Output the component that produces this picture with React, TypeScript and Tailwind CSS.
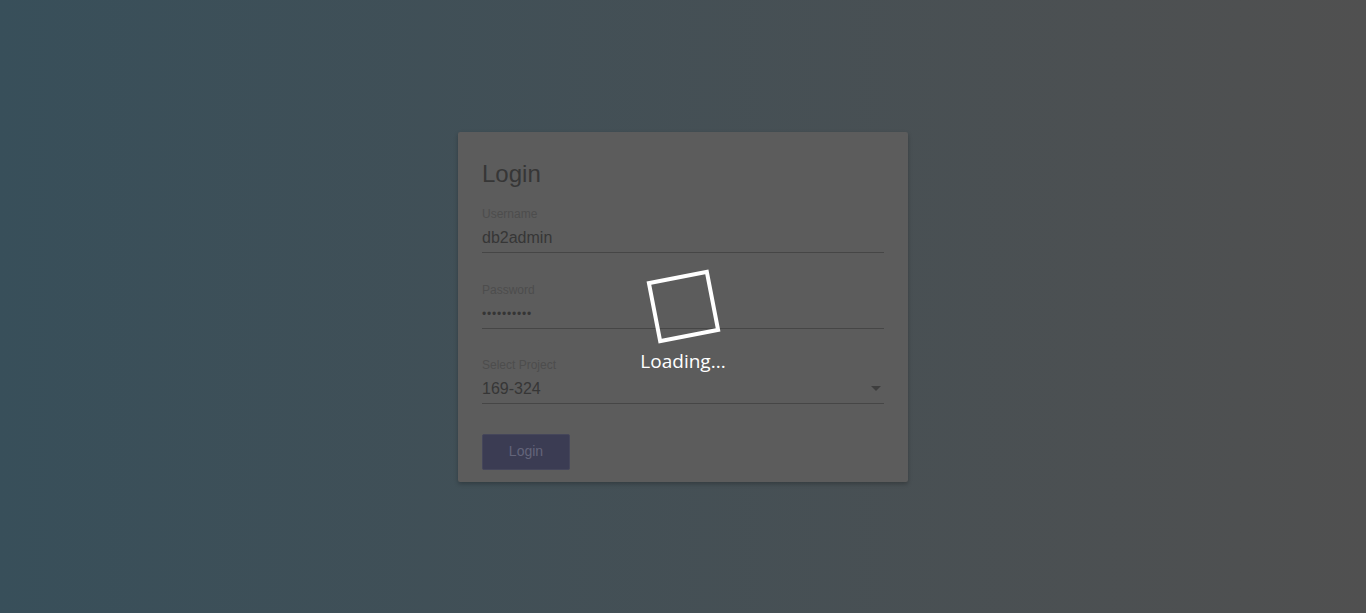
import React from "react";

const fields = [
  { label: "Username", value: "db2admin", kind: "text" },
  { label: "Password", value: "••••••••••", kind: "password" },
  { label: "Select Project", value: "169-324", kind: "select" },
];

export default function App() {
  return (
    <div
      className="relative h-[613px] w-full overflow-hidden bg-gradient-to-r from-[#384f5a] to-[#505050] flex items-center justify-center"
      style={{ fontFamily: '"Liberation Sans", Arial, sans-serif' }}
    >
      {/* login card (dimmed) */}
      <div className="w-[450px] h-[350px] bg-[#5c5c5c] rounded-[2px] shadow-[0_2px_4px_rgba(0,0,0,0.25)] px-6 pt-[26px] pb-[13px]">
        <h1 className="text-[24px] leading-[32px] text-[#363636]">Login</h1>

        <div className="mt-[16px] flex flex-col">
          {fields.map((f, i) => (
            <div
              key={f.label}
              className={i === 0 ? "" : i === 1 ? "mt-[29px]" : "mt-[28px]"}
            >
              <p className="text-[12px] leading-[16px] text-[#4d4d4d]">{f.label}</p>
              <div className="relative pt-1 pb-[2px] border-b border-[#464646] flex items-center">
                {f.kind === "password" ? (
                  <span className="h-6 flex items-center text-[12px] tracking-[0.8px] text-[#353535]">
                    {f.value}
                  </span>
                ) : (
                  <span className="h-6 leading-6 text-[16px] text-[#363636]">{f.value}</span>
                )}
                {f.kind === "select" && (
                  <span className="ml-auto mr-[3px] w-0 h-0 border-l-[5px] border-r-[5px] border-t-[5px] border-l-transparent border-r-transparent border-t-[#3e3e3e]" />
                )}
              </div>
            </div>
          ))}
        </div>

        <button className="mt-[30px] w-[88px] h-[36px] rounded-[2px] bg-[#3b3c53] border border-[#45465a] text-[14px] text-[#63647a]">
          Login
        </button>
      </div>

      {/* loading overlay */}
      <div className="absolute inset-0 flex flex-col items-center justify-center pt-[35px]">
        <div className="w-[63px] h-[63px] border-4 border-white rotate-[-11deg]" />
        <p
          className="mt-[11px] text-[19px] leading-6 text-white"
          style={{ fontFamily: '"Open Sans", "Noto Sans", sans-serif' }}
        >
          Loading...
        </p>
      </div>
    </div>
  );
}
